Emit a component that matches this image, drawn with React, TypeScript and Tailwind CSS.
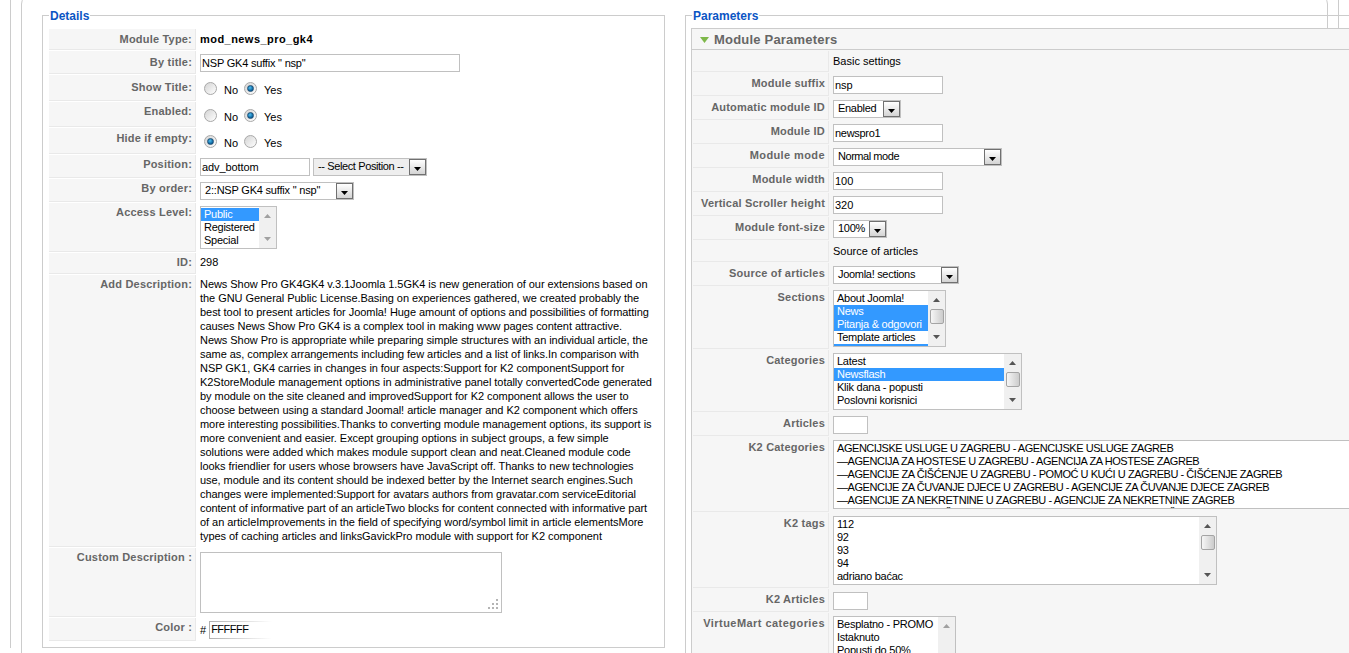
import type { ReactNode } from "react";

const description = [
  "News Show Pro GK4GK4 v.3.1Joomla 1.5GK4 is new generation of our extensions based on",
  "the GNU General Public License.Basing on experiences gathered, we created probably the",
  "best tool to present articles for Joomla! Huge amount of options and possibilities of formatting",
  "causes News Show Pro GK4 is a complex tool in making www pages content attractive.",
  "News Show Pro is appropriate while preparing simple structures with an individual article, the",
  "same as, complex arrangements including few articles and a list of links.In comparison with",
  "NSP GK1, GK4 carries in changes in four aspects:Support for K2 componentSupport for",
  "K2StoreModule management options in administrative panel totally convertedCode generated",
  "by module on the site cleaned and improvedSupport for K2 component allows the user to",
  "choose between using a standard Joomal! article manager and K2 component which offers",
  "more interesting possibilities.Thanks to converting module management options, its support is",
  "more convenient and easier. Except grouping options in subject groups, a few simple",
  "solutions were added which makes module support clean and neat.Cleaned module code",
  "looks friendlier for users whose browsers have JavaScript off. Thanks to new technologies",
  "use, module and its content should be indexed better by the Internet search engines.Such",
  "changes were implemented:Support for avatars authors from gravatar.com serviceEditorial",
  "content of informative part of an articleTwo blocks for content connected with informative part",
  "of an articleImprovements in the field of specifying word/symbol limit in article elementsMore",
  "types of caching articles and linksGavickPro module with support for K2 component",
];

function Arrow({ up, color }: { up?: boolean; color: string }) {
  return (
    <svg width="7" height="4" viewBox="0 0 7 4" className="block shrink-0">
      <polygon points={up ? "3.5,0 7,4 0,4" : "0,0 7,0 3.5,4"} fill={color} />
    </svg>
  );
}

function Input({ width, value, tracking = "" }: { width: string; value?: string; tracking?: string }) {
  return (
    <div className={`${width} ${tracking} h-[18px] border border-[#c0c0c0] bg-white pl-[1px] text-[11px] leading-[16px] whitespace-nowrap`}>
      {value}
    </div>
  );
}

function Select({
  width,
  value,
  muted,
  tracking = "tracking-[-0.3px]",
}: {
  width: string;
  value: string;
  muted?: boolean;
  tracking?: string;
}) {
  return (
    <div className={`${width} flex h-[18px] border border-[#c0c0c0] ${muted ? "bg-[#eeeeee]" : "bg-white"}`}>
      <div className={`${tracking} flex-1 overflow-hidden pl-[4px] text-[11px] leading-[14px] whitespace-nowrap`}>{value}</div>
      <div className="flex w-[17px] items-end justify-center border border-[#707070] bg-gradient-to-b from-white to-[#d4d4d4] pb-[3px]">
        <Arrow color="#000000" />
      </div>
    </div>
  );
}

type Option = { text: string; selected?: boolean };

function ListBox({
  width,
  height,
  options,
  thumb,
  noScroll,
  tracking = "tracking-[-0.25px]",
}: {
  width: string;
  height: string;
  options: Option[];
  thumb?: boolean;
  noScroll?: boolean;
  tracking?: string;
}) {
  return (
    <div className={`${width} ${height} flex border border-[#c0c0c0] bg-white`}>
      <div className="min-w-0 flex-1 overflow-hidden pt-[1px]">
        {options.map((o, i) => (
          <div
            key={i}
            className={`h-[13px] pl-[3px] text-[11px] leading-[13px] whitespace-nowrap ${tracking} ${o.selected ? "bg-[#3399ff] text-white" : "text-black"}`}
          >
            {o.text}
          </div>
        ))}
      </div>
      {!noScroll && (
        <div className="flex w-[17px] shrink-0 flex-col items-center bg-[#f0f0f0] py-[7px]">
          <Arrow up color={thumb ? "#555555" : "#a0a0a0"} />
          {thumb && (
            <div className="mt-[7px] h-[15px] w-[14px] rounded-[2px] border border-[#a4a4a4] bg-gradient-to-r from-[#f6f6f6] to-[#cccccc]" />
          )}
          <div className="flex-1" />
          <Arrow color={thumb ? "#555555" : "#a0a0a0"} />
        </div>
      )}
    </div>
  );
}

function Radio({ checked }: { checked?: boolean }) {
  return (
    <span className="flex h-[13px] w-[13px] items-center justify-center rounded-full border border-[#a8a8a8] bg-gradient-to-br from-[#d4d4d4] to-white">
      {checked && <span className="h-[7px] w-[7px] rounded-full border border-[#1f4f75] bg-[radial-gradient(circle_at_40%_35%,#4fc0f0,#0a5f9a_70%)]" />}
    </span>
  );
}

function YesNo({ value }: { value: "no" | "yes" }) {
  return (
    <div className="ml-[4px] flex pt-[7px] text-[11px] leading-[14px]">
      <Radio checked={value === "no"} />
      <span className="ml-[7px] mt-[1px] w-[20px]">No</span>
      <Radio checked={value === "yes"} />
      <span className="ml-[7px] mt-[1px]">Yes</span>
    </div>
  );
}

function Row({
  label,
  height,
  pt,
  labelWidth,
  labelTracking = "tracking-[0.2px]",
  children,
}: {
  label?: string;
  height: string;
  pt: string;
  labelWidth: string;
  labelTracking?: string;
  children?: ReactNode;
}) {
  return (
    <div className={`flex ${height}`}>
      <div className={`${labelWidth} ${pt} ${labelTracking} shrink-0 border-r border-b border-[#e9e9e9] bg-[#f6f6f6] pr-[3px] text-right text-[11px] leading-[14px] font-bold whitespace-nowrap text-[#666666]`}>
        {label}
      </div>
      <div className="min-w-0 flex-1 pl-[4px]">{children}</div>
    </div>
  );
}

function Details() {
  const w = "w-[147px]";
  return (
    <fieldset className="w-[623px] shrink-0 border border-[#cccccc] px-[6px] pt-[5px] pb-[6px]">
      <legend className="px-[1px] pt-[2px] text-[12px] leading-[15px] font-bold text-[#0b55c4]">Details</legend>
      <div className="flex flex-col gap-[1px]">
        <Row label="Module Type:" height="h-[21px]" pt="pt-[3px]" labelWidth={w}>
          <div className="pt-[3px] text-[11px] leading-[14px] font-bold tracking-[0.45px]">mod_news_pro_gk4</div>
        </Row>
        <Row label="By title:" height="h-[23px]" pt="pt-[4px]" labelWidth={w}>
          <div className="pt-[3px]"><Input width="w-[260px]" tracking="tracking-[-0.2px]" value={'NSP GK4 suffix " nsp"'} /></div>
        </Row>
        <Row label="Show Title:" height="h-[26px]" pt="pt-[5px]" labelWidth={w}><YesNo value="yes" /></Row>
        <Row label="Enabled:" height="h-[25px]" pt="pt-[2px]" labelWidth={w}><YesNo value="yes" /></Row>
        <Row label="Hide if empty:" height="h-[26px]" pt="pt-[3px]" labelWidth={w}><YesNo value="no" /></Row>
        <Row label="Position:" height="h-[23px]" pt="pt-[2px]" labelWidth={w}>
          <div className="flex gap-[3px] pt-[3px]">
            <Input width="w-[110px]" tracking="tracking-[-0.1px]" value="adv_bottom" />
            <Select width="w-[114px]" tracking="tracking-[-0.38px]" value="-- Select Position --" muted />
          </div>
        </Row>
        <Row label="By order:" height="h-[23px]" pt="pt-[2px]" labelWidth={w}>
          <div className="pt-[3px]"><Select width="w-[154px]" tracking="tracking-[-0.2px]" value={'2::NSP GK4 suffix " nsp"'} /></div>
        </Row>
        <Row label="Access Level:" height="h-[49px]" pt="pt-[2px]" labelWidth={w}>
          <div className="pt-[3px]">
            <ListBox
              width="w-[77px]"
              height="h-[43px]"
              options={[{ text: "Public", selected: true }, { text: "Registered" }, { text: "Special" }]}
            />
          </div>
        </Row>
        <Row label="ID:" height="h-[21px]" pt="pt-[2px]" labelWidth={w}>
          <div className="pt-[2px] text-[11px] leading-[14px]">298</div>
        </Row>
        <Row label="Add Description:" height="h-[272px]" pt="pt-[2px]" labelWidth={w}>
          <div className="pt-[2px] text-[11px] leading-[14px] tracking-[-0.05px] whitespace-nowrap">
            {description.map((line) => (
              <div key={line}>{line}</div>
            ))}
          </div>
        </Row>
        <Row label="Custom Description :" height="h-[69px]" pt="pt-[2px]" labelWidth={w}>
          <div className="pt-[4px]">
            <div className="flex h-[61px] w-[302px] items-end justify-end border border-[#c0c0c0] bg-white p-[2px]">
              <svg width="11" height="11" viewBox="0 0 11 11" fill="#b4b4b4">
                <rect x="8" y="0" width="2" height="2" />
                <rect x="4" y="4" width="2" height="2" />
                <rect x="8" y="4" width="2" height="2" />
                <rect x="0" y="8" width="2" height="2" />
                <rect x="4" y="8" width="2" height="2" />
                <rect x="8" y="8" width="2" height="2" />
              </svg>
            </div>
          </div>
        </Row>
        <Row label="Color :" height="h-[23px]" pt="pt-[2px]" labelWidth={w}>
          <div className="flex gap-[3px] pt-[3px] text-[11px] leading-[18px]">
            <span>#</span>
            <div className="h-[18px] w-[63px] bg-gradient-to-r from-[#b0b0b0] to-white py-[1px] pl-[1px]">
              <div className="h-[16px] bg-white pl-[1px] leading-[14px] tracking-[-0.5px]">FFFFFF</div>
            </div>
          </div>
        </Row>
      </div>
    </fieldset>
  );
}

function ParamRow({
  label,
  height = "h-[23px]",
  labelTracking,
  children,
}: {
  label?: string;
  height?: string;
  labelTracking?: string;
  children?: ReactNode;
}) {
  return (
    <Row label={label} height={height} pt="pt-[3px]" labelWidth="w-[136px]" labelTracking={labelTracking}>
      {children}
    </Row>
  );
}

function Field({ children }: { children: ReactNode }) {
  return <div className="pt-[3px]">{children}</div>;
}

function Heading({ text }: { text: string }) {
  return <div className="pt-[3px] text-[11px] leading-[14px]">{text}</div>;
}

function Parameters() {
  return (
    <fieldset className="ml-[20px] w-[720px] shrink-0 border border-[#cccccc] px-[5px] pt-[4px] pb-[5px]">
      <legend className="ml-[1px] px-[1px] pt-[2px] text-[12px] leading-[15px] font-bold text-[#0b55c4]">Parameters</legend>
      <div className="border border-[#cccccc] bg-[#f6f6f6]">
        <div className="flex h-[21px] items-center border-b border-[#cccccc] pt-[1px] pl-[8px]">
          <svg width="9" height="6" viewBox="0 0 9 6">
            <polygon points="0,0 9,0 4.5,6" fill="#7eb84a" />
          </svg>
          <span className="ml-[5px] text-[13px] leading-[16px] font-bold tracking-[0.2px] text-[#666666]">Module Parameters</span>
        </div>
        <div className="flex flex-col gap-[1px] pt-[1px] pl-[1px]">
          <ParamRow height="h-[21px]"><Heading text="Basic settings" /></ParamRow>
          <ParamRow label="Module suffix"><Field><Input width="w-[110px]" value="nsp" /></Field></ParamRow>
          <ParamRow label="Automatic module ID"><Field><Select width="w-[68px]" value="Enabled" /></Field></ParamRow>
          <ParamRow label="Module ID"><Field><Input width="w-[110px]" tracking="tracking-[-0.3px]" value="newspro1" /></Field></ParamRow>
          <ParamRow label="Module mode" labelTracking="tracking-[0.4px]"><Field><Select width="w-[169px]" tracking="tracking-[-0.45px]" value="Normal mode" /></Field></ParamRow>
          <ParamRow label="Module width"><Field><Input width="w-[110px]" value="100" /></Field></ParamRow>
          <ParamRow label="Vertical Scroller height"><Field><Input width="w-[110px]" value="320" /></Field></ParamRow>
          <ParamRow label="Module font-size"><Field><Select width="w-[54px]" value="100%" /></Field></ParamRow>
          <ParamRow height="h-[21px]"><Heading text="Source of articles" /></ParamRow>
          <ParamRow label="Source of articles"><Field><Select width="w-[126px]" value="Joomla! sections" /></Field></ParamRow>
          <ParamRow label="Sections" height="h-[62px]">
            <Field>
              <ListBox
                width="w-[113px]"
                height="h-[57px]"
                thumb
                options={[
                  { text: "About Joomla!" },
                  { text: "News", selected: true },
                  { text: "Pitanja & odgovori", selected: true },
                  { text: "Template articles" },
                  { text: "Weblinks", selected: true },
                ]}
              />
            </Field>
          </ParamRow>
          <ParamRow label="Categories" height="h-[62px]">
            <Field>
              <ListBox
                width="w-[189px]"
                height="h-[57px]"
                thumb
                options={[
                  { text: "Latest" },
                  { text: "Newsflash", selected: true },
                  { text: "Klik dana - popusti" },
                  { text: "Poslovni korisnici" },
                ]}
              />
            </Field>
          </ParamRow>
          <ParamRow label="Articles"><Field><Input width="w-[35px]" /></Field></ParamRow>
          <ParamRow label="K2 Categories" height="h-[75px]">
            <Field>
              <ListBox
                width="w-[620px]"
                height="h-[69px]"
                noScroll
                tracking="tracking-[-0.45px]"
                options={[
                  { text: "AGENCIJSKE USLUGE U ZAGREBU - AGENCIJSKE USLUGE ZAGREB" },
                  { text: "—AGENCIJA ZA HOSTESE U ZAGREBU - AGENCIJA ZA HOSTESE ZAGREB" },
                  { text: "—AGENCIJE ZA ČIŠĆENJE U ZAGREBU - POMOĆ U KUĆI U ZAGREBU - ČIŠĆENJE ZAGREB" },
                  { text: "—AGENCIJE ZA ČUVANJE DJECE U ZAGREBU - AGENCIJE ZA ČUVANJE DJECE ZAGREB" },
                  { text: "—AGENCIJE ZA NEKRETNINE U ZAGREBU - AGENCIJE ZA NEKRETNINE ZAGREB" },
                  { text: "—AGENCIJE ZA ZAPOŠLJAVANJE U ZAGREBU - AGENCIJE ZA ZAPOŠLJAVANJE ZAGREB" },
                ]}
              />
            </Field>
          </ParamRow>
          <ParamRow label="K2 tags" height="h-[75px]">
            <Field>
              <ListBox
                width="w-[384px]"
                height="h-[69px]"
                thumb
                options={[{ text: "112" }, { text: "92" }, { text: "93" }, { text: "94" }, { text: "adriano baćac" }]}
              />
            </Field>
          </ParamRow>
          <ParamRow label="K2 Articles"><Field><Input width="w-[35px]" /></Field></ParamRow>
          <ParamRow label="VirtueMart categories" height="h-[75px]" labelTracking="tracking-[0.45px]">
            <Field>
              <ListBox
                width="w-[123px]"
                height="h-[69px]"
                options={[{ text: "Besplatno - PROMO" }, { text: "Istaknuto" }, { text: "Popusti do 50%" }]}
              />
            </Field>
          </ParamRow>
        </div>
      </div>
    </fieldset>
  );
}

export default function App() {
  return (
    <div className="h-[653px] w-[1349px] overflow-hidden bg-white font-['Liberation_Sans',Arial,sans-serif] text-black">
      <div className="ml-[10px] h-full w-[1329px] border-x border-[#cccccc]">
        <div className="mt-[-5px] ml-[10px] h-[700px] w-[1307px] rounded-t-[9px] border border-[#cccccc] pt-[11px] pl-[20px]">
          <div className="flex items-start">
            <Details />
            <Parameters />
          </div>
        </div>
      </div>
    </div>
  );
}
